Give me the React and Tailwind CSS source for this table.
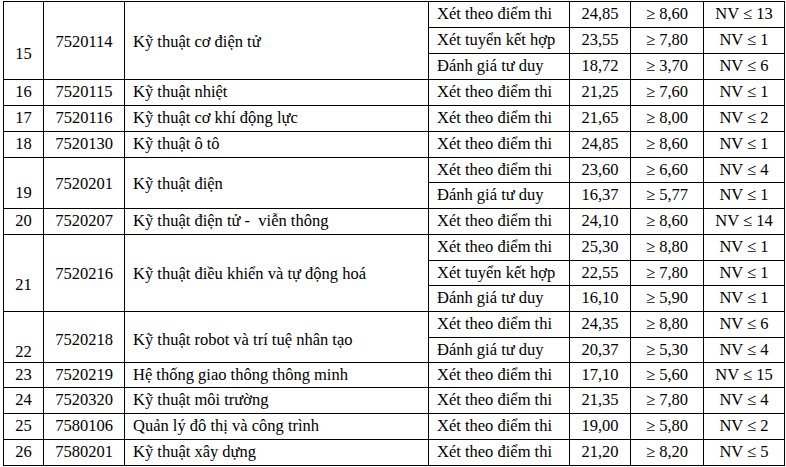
import React from "react";

const rows = [
  {
    n: "15", code: "7520114", name: "Kỹ thuật cơ điện tử", numPad: "pt-[27px]", textPad: "pt-[4px]",
    subs: [
      ["Xét theo điểm thi", "24,85", "≥ 8,60", "NV ≤ 13"],
      ["Xét tuyển kết hợp", "23,55", "≥ 7,80", "NV ≤ 1"],
      ["Đánh giá tư duy", "18,72", "≥ 3,70", "NV ≤ 6"],
    ],
  },
  { n: "16", code: "7520115", name: "Kỹ thuật nhiệt", subs: [["Xét theo điểm thi", "21,25", "≥ 7,60", "NV ≤ 1"]] },
  { n: "17", code: "7520116", name: "Kỹ thuật cơ khí động lực", subs: [["Xét theo điểm thi", "21,65", "≥ 8,00", "NV ≤ 2"]] },
  { n: "18", code: "7520130", name: "Kỹ thuật ô tô", subs: [["Xét theo điểm thi", "24,85", "≥ 8,60", "NV ≤ 1"]] },
  {
    n: "19", code: "7520201", name: "Kỹ thuật điện", numPad: "pt-[21px]", textPad: "pt-[2px]",
    subs: [
      ["Xét theo điểm thi", "23,60", "≥ 6,60", "NV ≤ 4"],
      ["Đánh giá tư duy", "16,37", "≥ 5,77", "NV ≤ 1"],
    ],
  },
  { n: "20", code: "7520207", name: "Kỹ thuật điện tử -  viễn thông", subs: [["Xét theo điểm thi", "24,10", "≥ 8,60", "NV ≤ 14"]] },
  {
    n: "21", code: "7520216", name: "Kỹ thuật điều khiển và tự động hoá", numPad: "pt-[24px]", textPad: "pt-[3px]",
    subs: [
      ["Xét theo điểm thi", "25,30", "≥ 8,80", "NV ≤ 1"],
      ["Xét tuyển kết hợp", "22,55", "≥ 7,80", "NV ≤ 1"],
      ["Đánh giá tư duy", "16,10", "≥ 5,90", "NV ≤ 1"],
    ],
  },
  {
    n: "22", code: "7520218", name: "Kỹ thuật robot và trí tuệ nhân tạo", numPad: "pt-[30px]", textPad: "pt-[6px]",
    subs: [
      ["Xét theo điểm thi", "24,35", "≥ 8,80", "NV ≤ 6"],
      ["Đánh giá tư duy", "20,37", "≥ 5,30", "NV ≤ 4"],
    ],
  },
  { n: "23", code: "7520219", name: "Hệ thống giao thông thông minh", subs: [["Xét theo điểm thi", "17,10", "≥ 5,60", "NV ≤ 15"]] },
  { n: "24", code: "7520320", name: "Kỹ thuật môi trường", subs: [["Xét theo điểm thi", "21,35", "≥ 7,80", "NV ≤ 4"]] },
  { n: "25", code: "7580106", name: "Quản lý đô thị và công trình", subs: [["Xét theo điểm thi", "19,00", "≥ 5,80", "NV ≤ 2"]] },
  { n: "26", code: "7580201", name: "Kỹ thuật xây dựng", subs: [["Xét theo điểm thi", "21,20", "≥ 8,20", "NV ≤ 5"]] },
];

const span = { 1: "row-span-1", 2: "row-span-2", 3: "row-span-3" };

export default function App() {
  return (
    <div className="w-[786px] h-[467px] bg-white overflow-hidden font-[family-name:Liberation_Serif,Times_New_Roman,serif] text-[16.5px] text-black leading-none">
      <div className="ml-[3px] mt-px w-[782px] grid grid-cols-[39px_80px_303px_140px_60px_72px_80px] grid-rows-[25px_25px_25px_25px_25px_25px_24px_25px_25px_25px_24px_25px_25px_24px_24px_25px_25px_25px] gap-px p-px bg-black">
        {rows.map((r) => {
          const s = span[r.subs.length];
          return (
            <React.Fragment key={r.n}>
              <div className={`${s} bg-white flex items-center justify-center ${r.numPad || ""}`}>{r.n}</div>
              <div className={`${s} bg-white flex items-center justify-center ${r.textPad || ""}`}>{r.code}</div>
              <div className={`${s} bg-white flex items-center pl-2 whitespace-pre ${r.textPad || ""}`}>{r.name}</div>
              {r.subs.map((sub, i) => (
                <React.Fragment key={i}>
                  <div className="bg-white flex items-center pl-2 whitespace-nowrap">{sub[0]}</div>
                  <div className="bg-white flex items-center justify-center">{sub[1]}</div>
                  <div className="bg-white flex items-center justify-center">{sub[2]}</div>
                  <div className="bg-white flex items-center justify-center">{sub[3]}</div>
                </React.Fragment>
              ))}
            </React.Fragment>
          );
        })}
      </div>
    </div>
  );
}
